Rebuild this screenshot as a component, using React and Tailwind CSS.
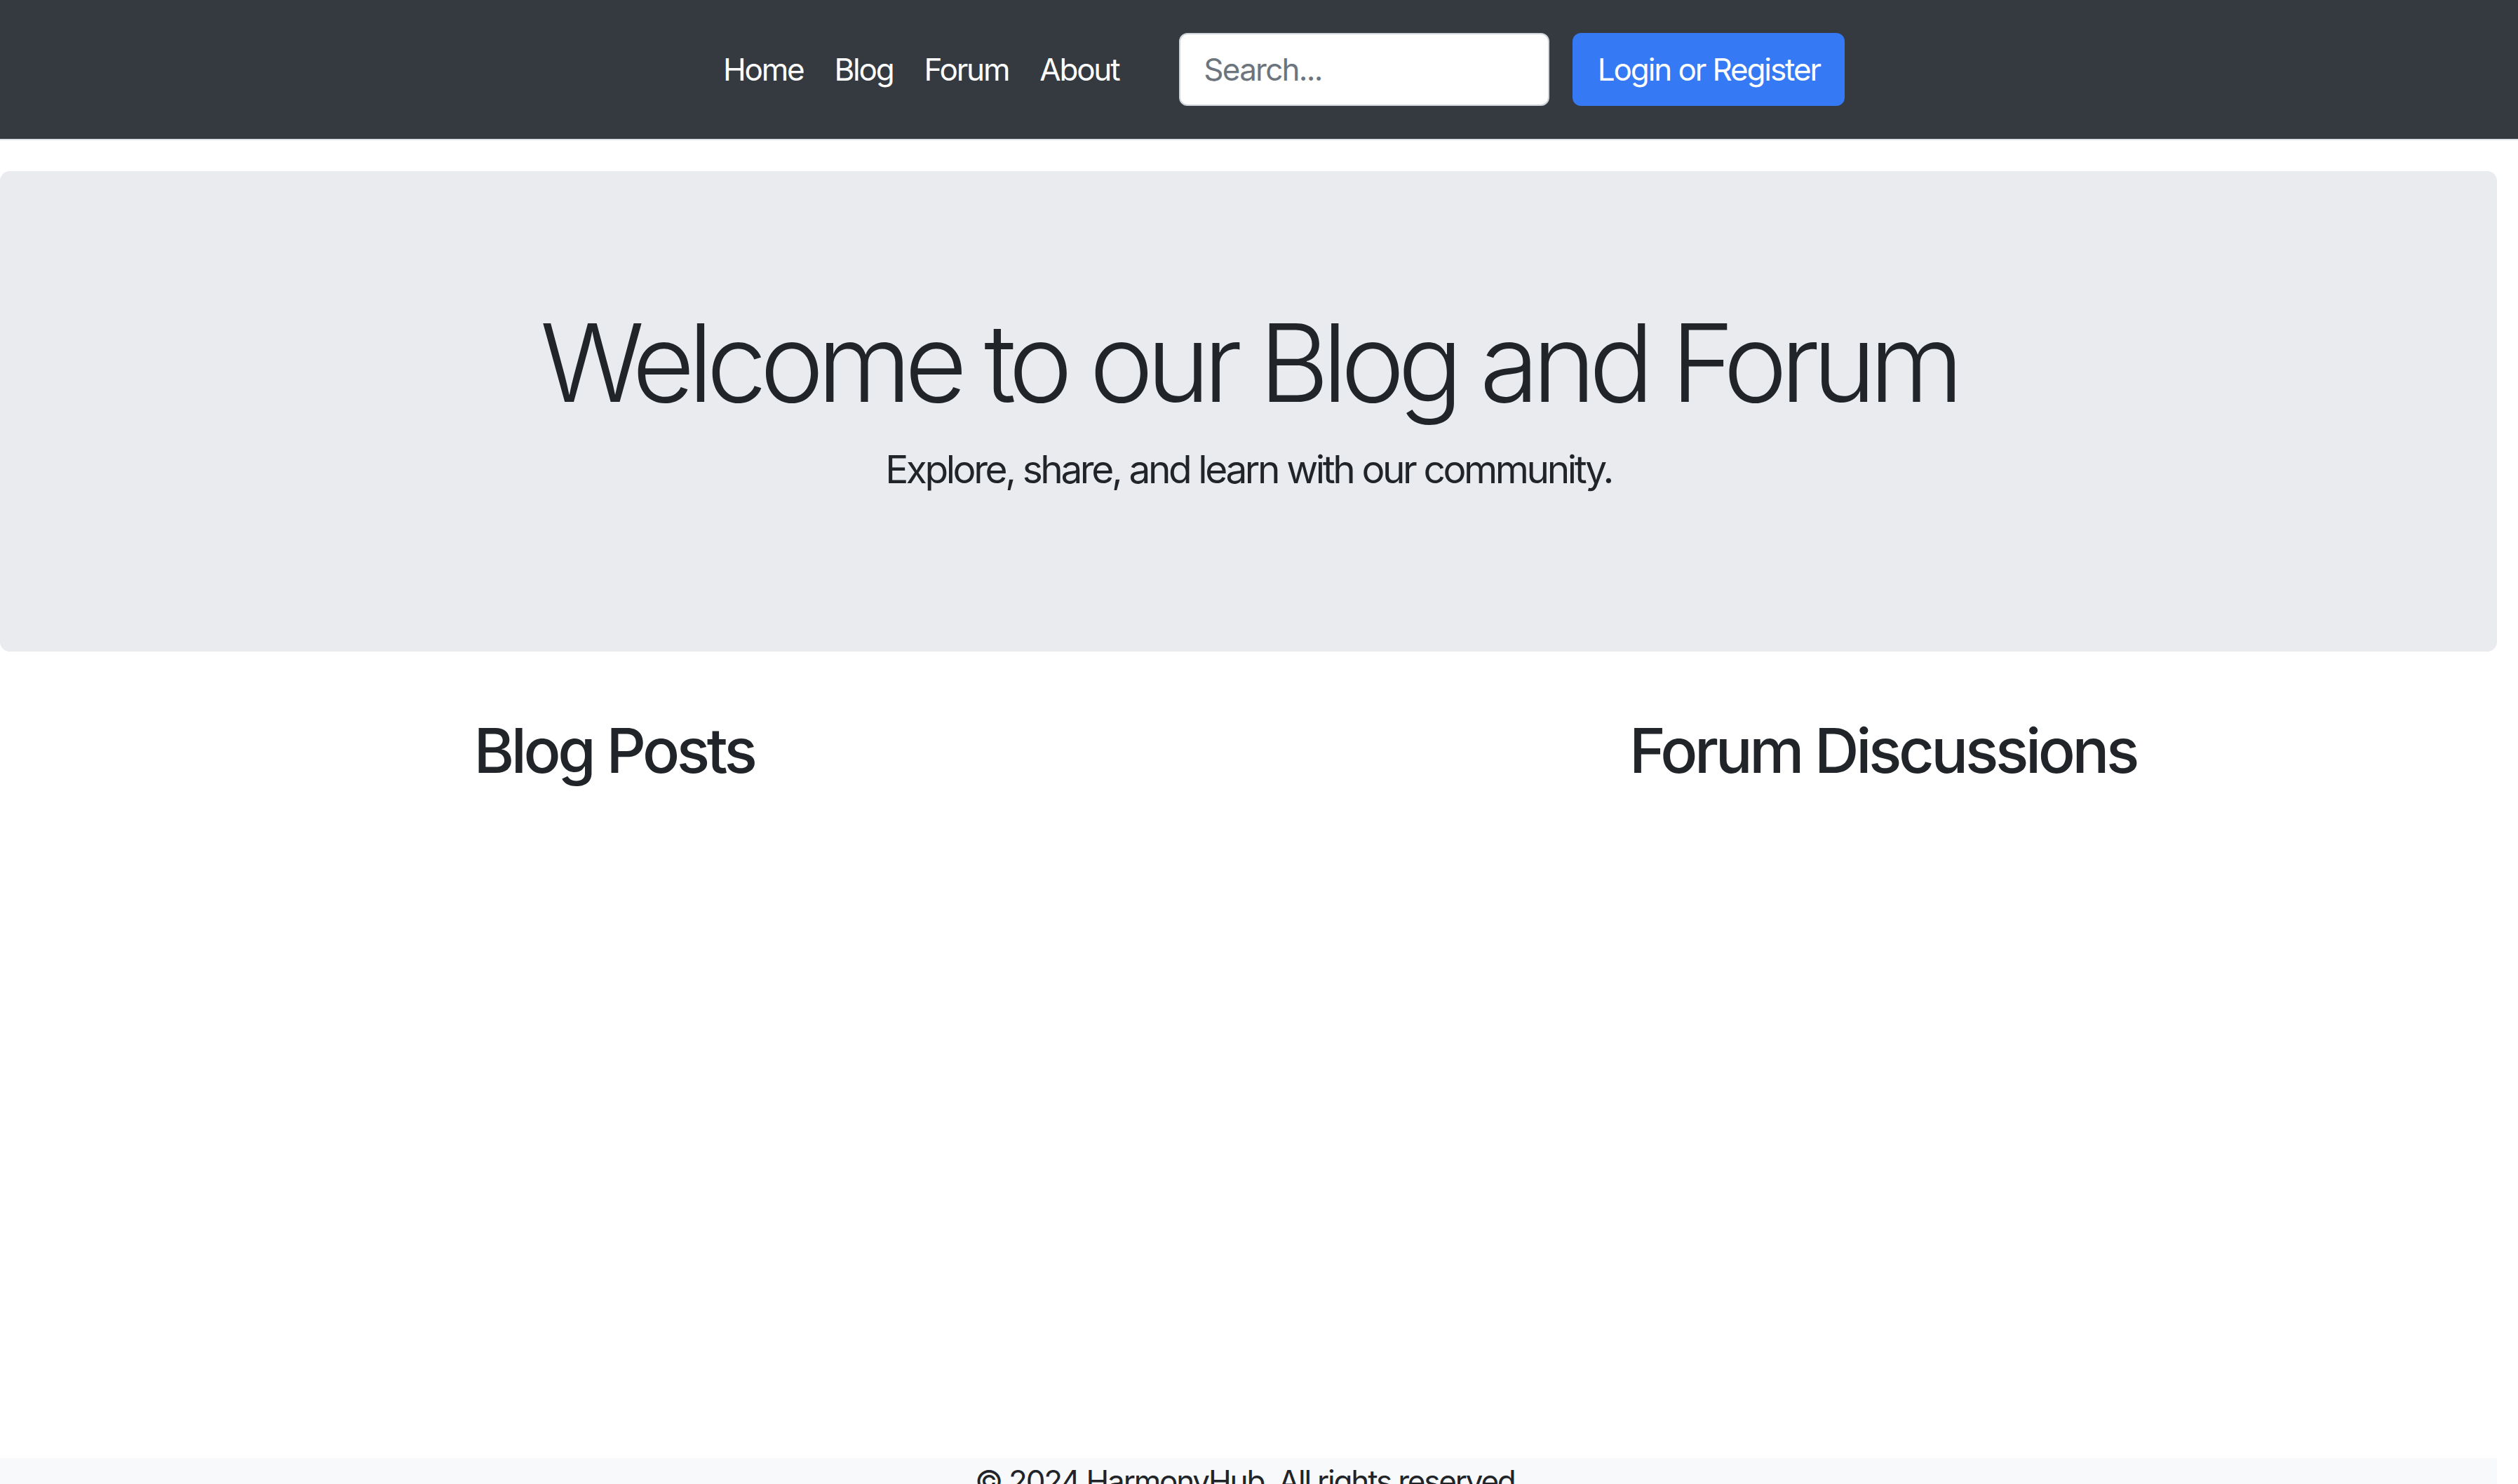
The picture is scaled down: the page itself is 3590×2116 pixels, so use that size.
import React from 'react';

const links = ['Home', 'Blog', 'Forum', 'About'];

const Navbar = () => (
  <nav className="h-[200px] bg-[#343a40] border-b-2 border-b-[#dee2e6] flex items-center pl-[1009px]">
    <ul className="flex items-center">
      {links.map((l) => (
        <li key={l}>
          <a href="#" className="block px-[22px] text-[44px] leading-[1.5] tracking-[-0.05em] text-white">
            {l}
          </a>
        </li>
      ))}
    </ul>
    <input
      type="text"
      placeholder="Search..."
      className="ml-[64px] w-[528px] h-[104px] rounded-[12px] border-2 border-[#ced4da] bg-white px-[33px] text-[44px] tracking-[-0.04em] text-[#212529] placeholder:text-[#6c757d] outline-none"
    />
    <button className="ml-[33px] w-[388px] h-[104px] rounded-[12px] bg-[#3679f5] text-[44px] tracking-[-0.048em] text-white">
      Login or Register
    </button>
  </nav>
);

const Footer = () => (
  <footer className="bg-[#f8f9fa] pt-[7px] pb-[40px] text-center w-[3560px]">
    <p className="text-[44px] leading-[1.2] tracking-[-0.05em] text-[#212529]">© 2024 HarmonyHub. All rights reserved.</p>
  </footer>
);

const App = () => {
  return (
    <div className="h-[2116px] overflow-hidden bg-white font-['Inter','Liberation_Sans',sans-serif] text-[#212529]">
      <Navbar />
      <div className="w-[3560px] mt-[44px] h-[685px] rounded-[14px] bg-[#e9ebef] pt-[181px] text-center">
        <h1 className="text-[154px] leading-[1.2] font-light tracking-[-0.063em] mb-[18px]">Welcome to our Blog and Forum</h1>
        <p className="text-[55px] leading-[1.5] tracking-[-0.062em]">Explore, share, and learn with our community.</p>
      </div>
      <div className="w-[3560px] h-[1150px] grid grid-cols-2 gap-[58px] pt-[89px]">
        <div className="text-center">
          <h2 className="text-[88px] leading-[1.2] font-medium tracking-[-0.05em]">Blog Posts</h2>
        </div>
        <div className="text-center">
          <h2 className="text-[88px] leading-[1.2] font-medium tracking-[-0.05em]">Forum Discussions</h2>
        </div>
      </div>
      <Footer />
    </div>
  );
};

export default App;
